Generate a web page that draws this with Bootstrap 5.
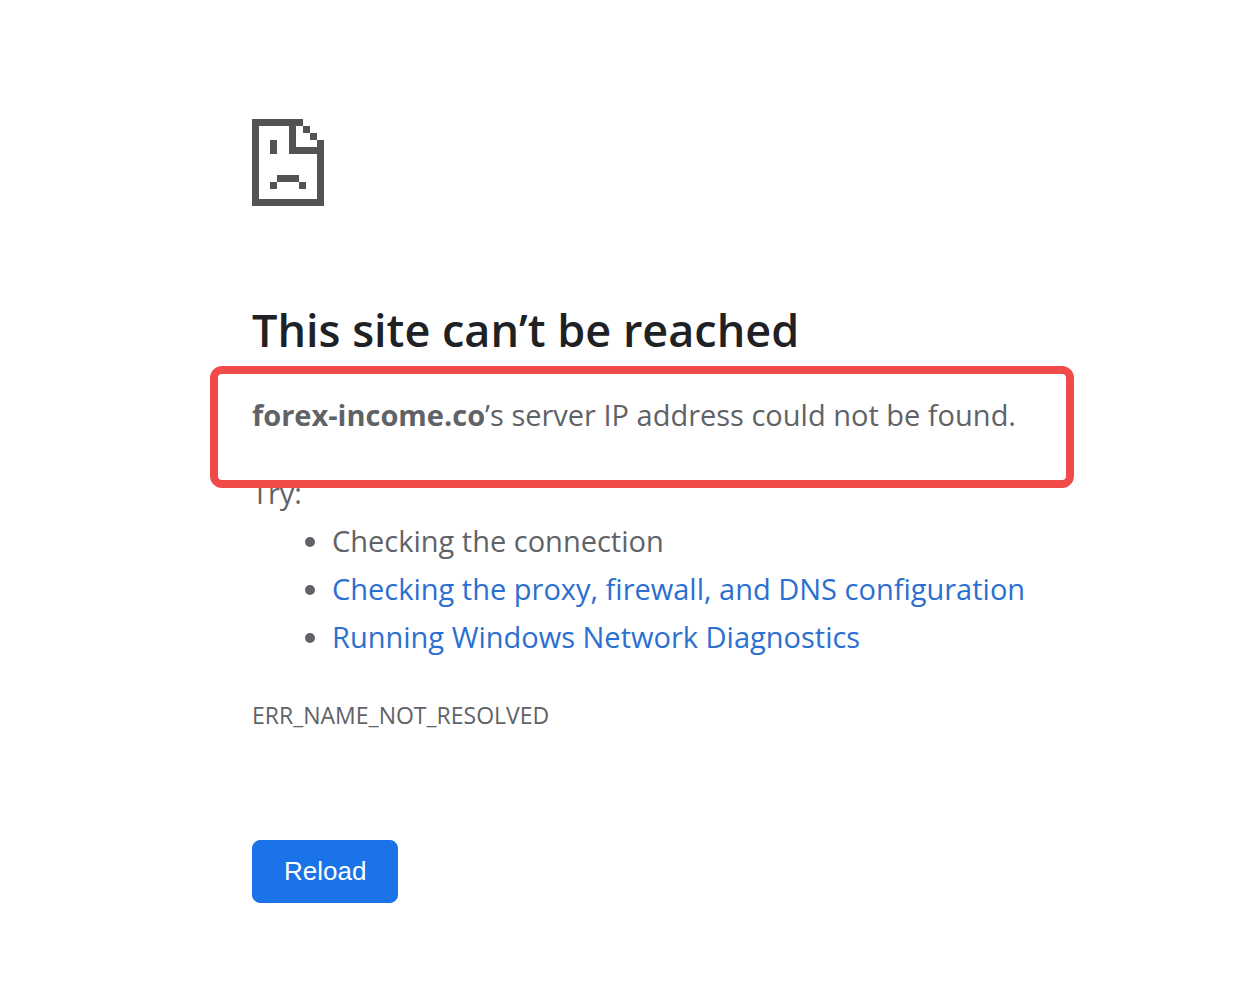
<!DOCTYPE html>
<html lang="en">
<head>
<meta charset="utf-8">
<meta name="viewport" content="width=device-width, initial-scale=1">
<title>forex-income.co</title>
<link href="https://cdn.jsdelivr.net/npm/bootstrap@5.3.0/dist/css/bootstrap.min.css" rel="stylesheet">
<style>
  body { font-family: "Open Sans", "Noto Sans", sans-serif; font-size: 29px; line-height: 48px; color: #5f6368; background: #fff; }
  .error-page { padding: 119px 18% 80px 20%; }
  .error-icon { width: 72px; height: 87px; margin-bottom: 92px; }
  .error-title { font-size: 45px; line-height: 64px; font-weight: 600; color: #202124; margin-bottom: 29px; }
  .summary-frame { inset: -25px -41px -49px -42px; border: 8px solid #f04b48; border-radius: 12px; z-index: 1; }
  .try-label { margin-top: 30px; }
  .hints { padding-left: 80px; margin-bottom: 32px; }
  .hints a { color: #2b6fd0; }
  .error-code { font-size: 23px; line-height: 44px; margin-bottom: 103px; }
  .btn-reload { --bs-btn-bg: #1a73e8; --bs-btn-border-color: #1a73e8; --bs-btn-hover-bg: #1765cc; font-family: "Liberation Sans", Arial, sans-serif; font-size: 26px; line-height: 39px; padding: 11px 31px; border-radius: 8px; }
</style>
</head>
<body>
<main class="error-page">
  <svg class="error-icon d-block" viewBox="0 0 72 87" fill="#535353" shape-rendering="crispEdges" aria-hidden="true">
    <path d="M0 0H51V7H44V28H65V21H72V87H0ZM7 7V80H65V35H37V7Z" fill-rule="evenodd"/>
    <path d="M51 7h7v7h-7zM58 14h7v7h-7zM18 21h7v14h-7zM25 56h22v7H25zM18 63h7v7h-7zM47 63h7v7h-7z"/>
  </svg>
  <h1 class="error-title">This site can’t be reached</h1>
  <div class="position-relative">
    <p class="mb-0"><strong>forex-income.co</strong>’s server IP address could not be found.</p>
    <div class="summary-frame position-absolute pe-none"></div>
  </div>
  <p class="try-label mb-0">Try:</p>
  <ul class="hints">
    <li>Checking the connection</li>
    <li><a class="text-decoration-none" href="#proxy">Checking the proxy, firewall, and DNS configuration</a></li>
    <li><a class="text-decoration-none" href="#diagnose">Running Windows Network Diagnostics</a></li>
  </ul>
  <div class="error-code">ERR_NAME_NOT_RESOLVED</div>
  <button type="button" class="btn btn-primary btn-reload">Reload</button>
</main>
<script src="https://cdn.jsdelivr.net/npm/bootstrap@5.3.0/dist/js/bootstrap.bundle.min.js"></script>
</body>
</html>
